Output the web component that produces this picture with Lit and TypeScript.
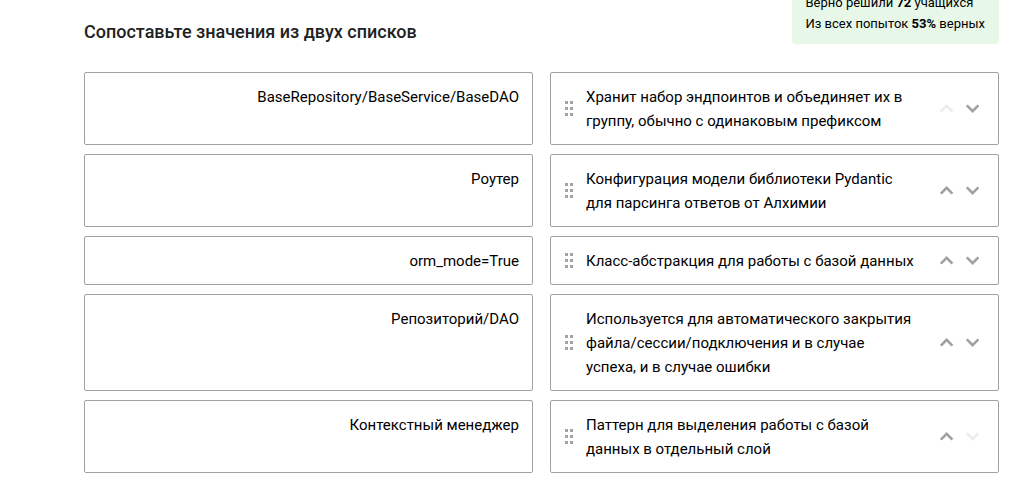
import { LitElement, html, css, svg } from "lit";
import { customElement, property, state } from "lit/decorators.js";

const terms = [
  "BaseRepository/BaseService/BaseDAO",
  "Роутер",
  "orm_mode=True",
  "Репозиторий/DAO",
  "Контекстный менеджер",
];

const gripDots = [0, 6, 12].flatMap((y) =>
  [0, 5].map((x) => svg`<rect x=${x} y=${y} width="3" height="3" />`),
);

@customElement("sort-option")
export class SortOption extends LitElement {
  @property() text = "";
  @property({ type: Boolean }) first = false;
  @property({ type: Boolean }) last = false;

  static styles = css`
    :host {
      display: flex;
      align-items: center;
      box-sizing: border-box;
      padding: 0 12px 0 14px;
      border: 1px solid #a0a0a0;
      border-radius: 2px;
      background: #fff;
    }
    .grip {
      flex: none;
      width: 8px;
      height: 15px;
      fill: #a3a3a3;
      cursor: grab;
    }
    .text {
      flex: 1;
      min-width: 0;
      padding: 12px 17px 11px 13px;
    }
    .move {
      display: flex;
      align-items: center;
      justify-content: center;
      flex: none;
      width: 26px;
      height: 26px;
      padding: 0;
      border: 0;
      background: none;
      color: #a0a0a0;
      cursor: pointer;
    }
    .move:disabled {
      color: #ececec;
      cursor: default;
    }
    .chevron {
      width: 14px;
      height: 9px;
      fill: none;
      stroke: currentColor;
      stroke-width: 2.6;
    }
  `;

  private move(step: number) {
    this.dispatchEvent(new CustomEvent("move", { detail: step }));
  }

  render() {
    return html`
      <svg class="grip" viewBox="0 0 8 15" aria-hidden="true">${gripDots}</svg>
      <span class="text">${this.text}</span>
      <button class="move" type="button" aria-label="Вверх" ?disabled=${this.first} @click=${() => this.move(-1)}>
        <svg class="chevron" viewBox="0 0 14 9"><path d="M.8 7.7 6.6 1.9l5.8 5.8" /></svg>
      </button>
      <button class="move" type="button" aria-label="Вниз" ?disabled=${this.last} @click=${() => this.move(1)}>
        <svg class="chevron" viewBox="0 0 14 9"><path d="M.8 1.3 6.6 7.1l5.8-5.8" /></svg>
      </button>
    `;
  }
}

@customElement("app-root")
export class AppRoot extends LitElement {
  @state() private options = [
    "Хранит набор эндпоинтов и объединяет их в группу, обычно с одинаковым префиксом",
    "Конфигурация модели библиотеки Pydantic для парсинга ответов от Алхимии",
    "Класс-абстракция для работы с базой данных",
    "Используется для автоматического закрытия файла/сессии/подключения и в случае успеха, и в случае ошибки",
    "Паттерн для выделения работы с базой данных в отдельный слой",
  ];

  static styles = css`
    :host {
      display: block;
      padding: 0 28px 8px 84px;
      background: #fff;
      color: #000;
      font: 15px/24px Roboto, "Noto Sans", sans-serif;
    }
    .header {
      display: flex;
      align-items: flex-end;
      justify-content: space-between;
      height: 44px;
      overflow: hidden;
    }
    .title {
      margin: 0;
      color: #222;
      font-size: 18px;
      font-weight: 500;
      line-height: 24px;
    }
    .stats {
      padding: 10px 14px;
      border-radius: 4px;
      background: #e7f8e9;
      font-size: 13px;
      line-height: 21px;
    }
    .stats p {
      margin: 0;
    }
    .pairs {
      display: grid;
      grid-template-columns: repeat(2, minmax(0, 1fr));
      gap: 9px 17px;
      margin-top: 28px;
    }
    .term {
      box-sizing: border-box;
      padding: 12px 13px 11px;
      border: 1px solid #a0a0a0;
      border-radius: 2px;
      text-align: right;
    }
  `;

  private move(index: number, step: number) {
    const next = [...this.options];
    [next[index], next[index + step]] = [next[index + step], next[index]];
    this.options = next;
  }

  render() {
    return html`
      <header class="header">
        <h2 class="title">Сопоставьте значения из двух списков</h2>
        <div class="stats">
          <p>Верно решили <b>72</b> учащихся</p>
          <p>Из всех попыток <b>53%</b> верных</p>
        </div>
      </header>
      <main class="pairs">
        ${this.options.map(
          (option, i) => html`
            <div class="term">${terms[i]}</div>
            <sort-option
              .text=${option}
              .first=${i === 0}
              .last=${i === this.options.length - 1}
              @move=${(e: CustomEvent<number>) => this.move(i, e.detail)}
            ></sort-option>
          `,
        )}
      </main>
    `;
  }
}
